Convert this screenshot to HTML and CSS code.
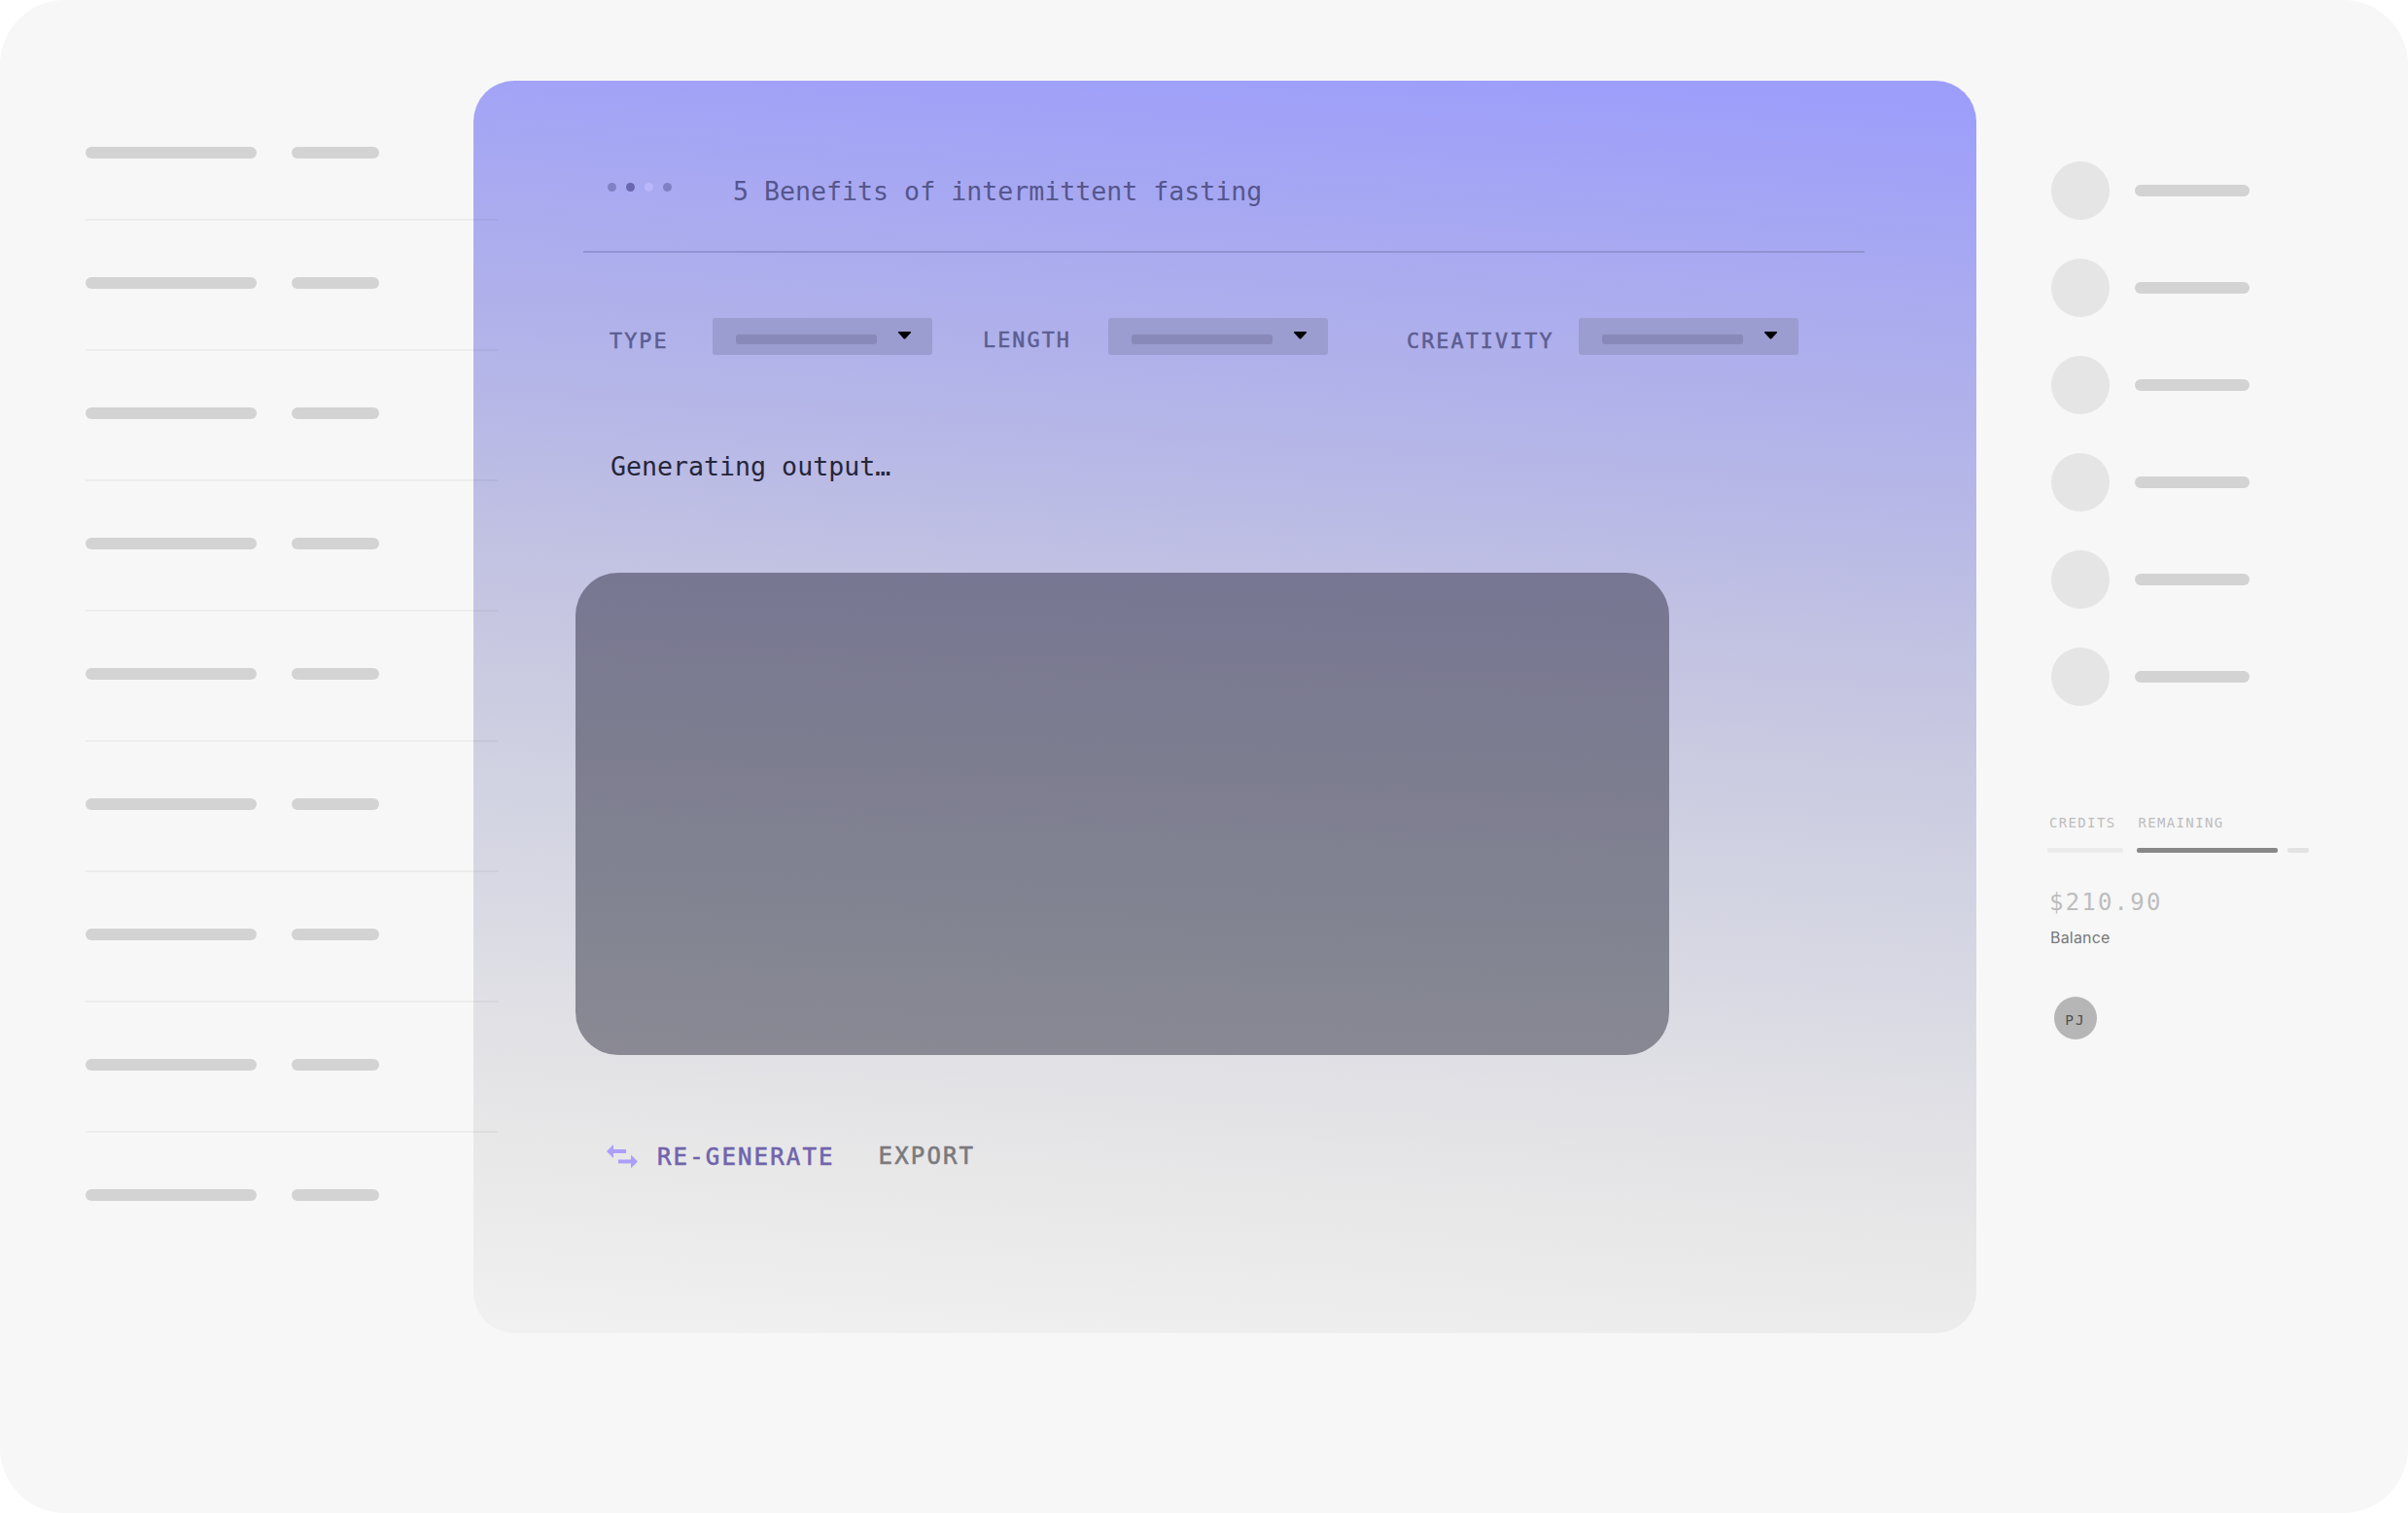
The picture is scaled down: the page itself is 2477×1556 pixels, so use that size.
FILE: index.html
```html
<!DOCTYPE html>
<html lang="en">
<head>
<meta charset="utf-8">
<title>Generate</title>
<link rel="stylesheet" href="styles.css">
</head>
<body>
<div class="app">
  <ul class="rows">
    <li class="row"><i class="bar long"></i><i class="bar short"></i></li>
    <li class="row"><i class="bar long"></i><i class="bar short"></i></li>
    <li class="row"><i class="bar long"></i><i class="bar short"></i></li>
    <li class="row"><i class="bar long"></i><i class="bar short"></i></li>
    <li class="row"><i class="bar long"></i><i class="bar short"></i></li>
    <li class="row"><i class="bar long"></i><i class="bar short"></i></li>
    <li class="row"><i class="bar long"></i><i class="bar short"></i></li>
    <li class="row"><i class="bar long"></i><i class="bar short"></i></li>
    <li class="row"><i class="bar long"></i><i class="bar short"></i></li>
  </ul>

  <main class="panel">
    <header class="prompt">
      <span class="dots"><i></i><i class="strong"></i><i class="light"></i><i></i></span>
      <h1 class="title">5 Benefits of intermittent fasting</h1>
    </header>
    <div class="filters">
      <span class="label type">TYPE</span>
      <span class="select"><i class="value"></i><svg class="caret" viewBox="0 0 13 8"><path d="M.6 0h11.8q1 .2.4 1.200L7.400 7.200q-.9.9-1.800 0L.2 1.200Q-.4.200.6 0z"/></svg></span>
      <span class="label length">LENGTH</span>
      <span class="select"><i class="value"></i><svg class="caret" viewBox="0 0 13 8"><path d="M.6 0h11.8q1 .2.4 1.200L7.400 7.200q-.9.9-1.800 0L.2 1.200Q-.4.200.6 0z"/></svg></span>
      <span class="label creativity">CREATIVITY</span>
      <span class="select"><i class="value"></i><svg class="caret" viewBox="0 0 13 8"><path d="M.6 0h11.8q1 .2.4 1.200L7.400 7.200q-.9.9-1.800 0L.2 1.200Q-.4.200.6 0z"/></svg></span>
    </div>
    <p class="status">Generating output…</p>
    <div class="output"></div>
    <div class="actions">
      <svg class="swap" viewBox="0 0 32 24"><path d="M0 7 7 0v5h13v4H7v5zM32 17.500 25 10.500v5H12v4h13v5z"/></svg>
      <span class="action primary">RE-GENERATE</span>
      <span class="action">EXPORT</span>
    </div>
  </main>

  <aside class="side">
    <ul class="people">
      <li><i class="face"></i><i class="bar name"></i></li>
      <li><i class="face"></i><i class="bar name"></i></li>
      <li><i class="face"></i><i class="bar name"></i></li>
      <li><i class="face"></i><i class="bar name"></i></li>
      <li><i class="face"></i><i class="bar name"></i></li>
      <li><i class="face"></i><i class="bar name"></i></li>
    </ul>
    <div class="credits"><span>CREDITS</span><span>REMAINING</span></div>
    <div class="meter"><i class="m1"></i><i class="m2"></i><i class="m3"></i></div>
    <div class="amount">$210.90</div>
    <div class="balance">Balance</div>
    <div class="avatar">PJ</div>
  </aside>
</div>
</body>
</html>
```
FILE: styles.css
```css
* { box-sizing: border-box; margin: 0; padding: 0; }
body { background: #fff; font-family: "DejaVu Sans Mono", monospace; }
ul { list-style: none; }
i { display: block; flex: none; }

.app {
  display: flex;
  width: 2477px;
  height: 1556px;
  border-radius: 67px;
  background: #f7f7f7;
  overflow: hidden;
}
.bar { height: 12px; border-radius: 6px; background: #d3d3d3; }

.rows { width: 487px; padding: 93px 0 0 88px; flex: none; }
.row {
  position: relative;
  z-index: 1;
  display: flex;
  align-items: flex-end;
  gap: 36px;
  width: 424px;
  height: 134px;
  padding-bottom: 62px;
  border-bottom: 2px solid rgba(0, 0, 0, .04);
}
.row:last-child { border-color: transparent; }
.long { width: 176px; }
.short { width: 90px; }

.panel {
  flex: none;
  width: 1546px;
  height: 1288px;
  margin-top: 83px;
  padding-left: 105px;
  border-radius: 42px;
  background: linear-gradient(184deg, #9d9efa 2%, #a7a8f2 13%, #afb0eb 23%, #b8b9e6 33%, #c1c1e3 41%, #cacae1 51%, #d2d3e2 60%, #d9d9e4 68%, #e0e0e5 76%, #e7e7e8 85%, #ececec 93%, #f1f1f1 100%);
}
.prompt {
  display: flex;
  width: 1318px;
  height: 177px;
  margin-left: 8px;
  padding: 95px 0 0 25px;
  border-bottom: 2px solid #9192d3;
}
.dots { display: flex; gap: 10px; width: 129px; padding-top: 10px; }
.dots i { width: 9px; height: 9px; border-radius: 50%; background: #8180c4; }
.dots .strong { background: #6a66b0; }
.dots .light { background: #bab7fb; }
.title { padding-top: 1px; font-size: 26.6px; font-weight: 400; line-height: 36px; color: #55568c; white-space: pre; }

.filters { display: flex; height: 38px; margin: 67px 0 0 35px; }
.label {
  flex: none;
  padding-top: 10px;
  font-size: 21.700px;
  line-height: 28px;
  letter-spacing: 2.100px;
  color: #5c5d91;
  -webkit-text-stroke: .5px #5c5d91;
}
.type { width: 106px; }
.length { width: 181px; padding-left: 52px; padding-top: 9px; }
.creativity { width: 258px; padding-left: 81px; }
.select {
  display: flex;
  flex: none;
  align-items: flex-start;
  width: 226px;
  height: 38px;
  padding: 17px 0 0 24px;
  border-radius: 3px;
  background: #9b9ccf;
}
.value { width: 145px; height: 10px; border-radius: 3px; background: #8889b8; }
.caret { width: 13px; height: 8px; margin: -3px 0 0 22px; }

.status { margin: 97px 0 0 36px; font-size: 26.6px; line-height: 36px; color: #26263a; }
.output {
  width: 1125px;
  height: 496px;
  margin-top: 91px;
  border-radius: 44px;
  background: linear-gradient(182deg, #777693 0%, #7d7d90 40%, #848692 80%, #8a8994 100%);
}
.actions { display: flex; margin: 90px 0 0 32px; }
.swap { width: 32px; height: 24px; margin-top: 2px; fill: #ab9ffa; }
.action {
  padding-left: 45px;
  font-size: 24px;
  line-height: 28px;
  letter-spacing: 2.150px;
  color: #7a7a7d;
  -webkit-text-stroke: .6px #7a7a7d;
}
.primary { padding: 1px 0 0 20px; color: #7064ac; -webkit-text-stroke-color: #7064ac; }

.side { width: 370px; padding: 166px 0 0 75px; }
.people li { display: flex; align-items: center; height: 60px; margin: 0 0 40px 2px; }
.face { width: 60px; height: 60px; margin-right: 26px; border-radius: 50%; background: #e5e5e5; }
.name { width: 118px; }
.credits { display: flex; gap: 23px; margin-top: 110px; font-size: 14px; line-height: 20px; letter-spacing: 1.350px; color: #bdbdbd; }
.meter { display: flex; margin: 16px 0 0 -2px; }
.meter i { height: 5px; border-radius: 2px; }
.m1 { width: 78px; background: #ebebeb; }
.m2 { width: 145px; margin: 0 10px 0 14px; background: #888; }
.m3 { width: 22px; background: #e2e2e2; }
.amount { margin-top: 35px; font-size: 24px; line-height: 32px; letter-spacing: 2.200px; color: #bdbdbd; }
.balance { margin-top: 10px; padding-left: 1px; font: 16px/20px Inter, sans-serif; letter-spacing: .2px; color: #777; }
.avatar {
  width: 44px;
  height: 44px;
  margin: 51px 0 0 5px;
  border-radius: 50%;
  background: #b6b6b6;
  font-size: 14.500px;
  line-height: 48px;
  letter-spacing: 2px;
  text-align: center;
  color: #505050;
}
```
